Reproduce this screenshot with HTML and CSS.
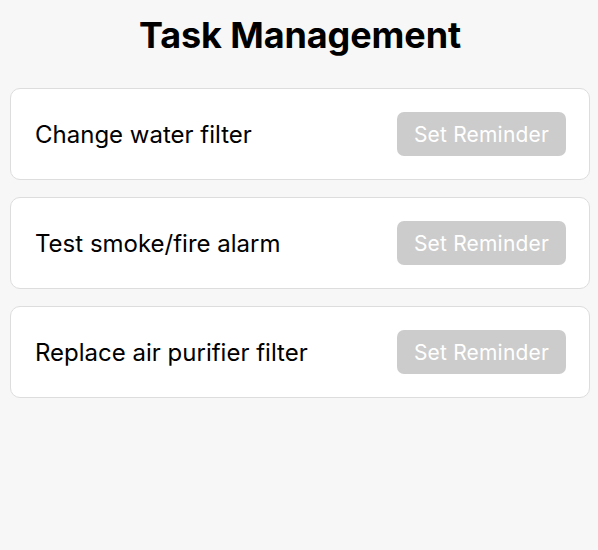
FILE: index.html
```html
<!DOCTYPE html>
<html>
<head>
<meta charset="utf-8">
<link rel="stylesheet" href="styles.css">
</head>
<body>
<div class="page">
  <h1 class="title">Task Management</h1>
  <div class="list">
    <div class="card">
      <span class="task">Change water filter</span>
      <button class="btn" disabled>Set Reminder</button>
    </div>
    <div class="card">
      <span class="task">Test smoke/fire alarm</span>
      <button class="btn" disabled>Set Reminder</button>
    </div>
    <div class="card">
      <span class="task">Replace air purifier filter</span>
      <button class="btn" disabled>Set Reminder</button>
    </div>
  </div>
</div>
</body>
</html>
```

FILE: styles.css
```css
html, body {
  margin: 0;
  padding: 0;
  background: #f7f7f7;
}
body {
  font-family: Inter, "Noto Sans", sans-serif;
  color: #000;
}
.page {
  padding: 14px 8px 10px 10px;
}
.title {
  margin: 0 0 32px 0;
  text-align: center;
  font-size: 36px;
  line-height: 42px;
  font-weight: 700;
  letter-spacing: -0.1px;
}
.list {
  display: flex;
  flex-direction: column;
  gap: 17px;
}
.card {
  display: flex;
  align-items: center;
  justify-content: space-between;
  background: #fff;
  border: 1px solid #dddddd;
  border-radius: 10px;
  padding: 23px 23px 23px 24px;
}
.task {
  font-size: 24px;
  font-weight: 400;
  letter-spacing: 0;
}
.btn {
  font-family: Inter, "Noto Sans", sans-serif;
  font-size: 21px;
  letter-spacing: 0.2px;
  color: #fff;
  background: #cccccc;
  border: none;
  border-radius: 7px;
  width: 169px;
  height: 44px;
  padding: 0;
}
```
